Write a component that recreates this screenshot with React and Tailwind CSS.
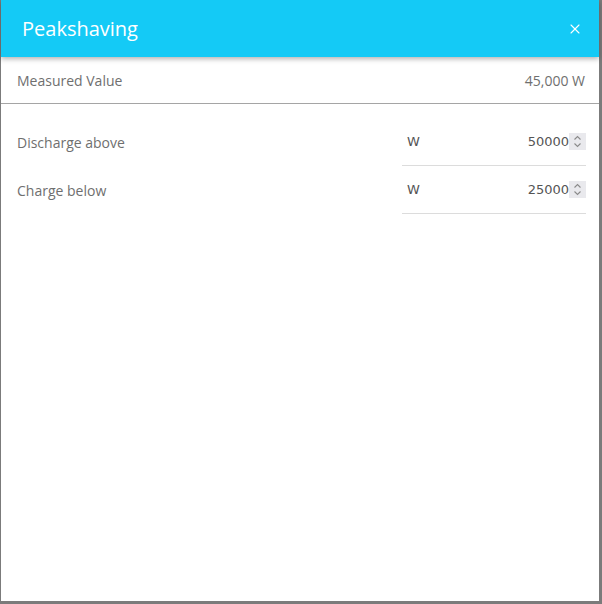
import { X } from 'lucide-react';

const Spinner = () => (
    <div className="w-[17px] h-[17px] bg-[#e9e9ed] flex items-center justify-center">
        <svg width="9" height="13" viewBox="0 0 9 13" fill="none" stroke="#8a8a8a" strokeWidth="1.1">
            <path d="M1.5 4.5 L4.5 1.5 L7.5 4.5" />
            <path d="M1.5 8.5 L4.5 11.5 L7.5 8.5" />
        </svg>
    </div>
);

const SettingRow = ({ label, value }) => (
    <div className="flex items-center h-12">
        <span className="flex-1 text-[14px] text-[#6f6f6f]">{label}</span>
        <div className="w-[184px] h-12 flex items-center border-b border-[#dcdcdc] pl-[5px] font-['DejaVu_Sans',sans-serif] text-[13px] text-[#555]">
            <span className="flex-1">W</span>
            <span>{value}</span>
            <Spinner />
        </div>
    </div>
);

export default function App() {
    return (
        <div className="w-[602px] h-[604px] bg-[#7b7b7b] font-['Open_Sans',sans-serif]">
            <div className="w-[598px] h-[601px] ml-px bg-white flex flex-col">
                <header className="h-[57px] bg-[#14caf6] flex items-center justify-between pl-[21px] pr-[16px] shadow-[0_2px_5px_rgba(0,0,0,0.3)] relative z-10">
                    <h1 className="text-[20px] text-white">Peakshaving</h1>
                    <X size={16} className="text-white" strokeWidth={1.6} />
                </header>
                <div className="flex items-center justify-between h-[47px] pl-4 pr-[14px] border-b border-[#a5a5a5]">
                    <span className="text-[14px] text-[#6f6f6f]">Measured Value</span>
                    <span className="text-[14px] text-[#6f6f6f]">45,000 W</span>
                </div>
                <div className="pl-4 pr-[13px] pt-[14px]">
                    <SettingRow label="Discharge above" value="50000" />
                    <SettingRow label="Charge below" value="25000" />
                </div>
            </div>
        </div>
    );
}
